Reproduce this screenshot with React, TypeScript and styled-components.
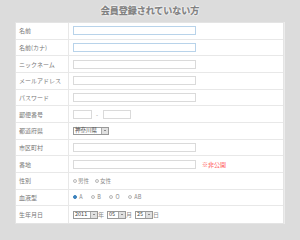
import styled, { createGlobalStyle } from 'styled-components';

const GlobalStyle = createGlobalStyle`
  html, body {
    margin: 0;
    padding: 0;
    background: #dcdcdc;
    font-family: "Noto Sans CJK JP", "Noto Sans", sans-serif;
  }
`;

const Page = styled.div`
  width: 300px;
  height: 240px;
  background: #dcdcdc;
  overflow: hidden;
`;

const Title = styled.h1`
  margin: 0;
  height: 22px;
  line-height: 21px;
  text-align: center;
  font-size: 9px;
  font-weight: 700;
  color: #808080;
  -webkit-text-stroke: 0.25px #808080;
  text-shadow: 0 0 1px #fff, 0 0 1px #fff, 0 0 2px #fff, 0 0 2px #fff, 0 0 2px #fff;
`;

const Form = styled.div`
  margin-left: 15px;
  width: 269px;
  background: #fff;
  border: 1px solid #e4e4e4;
  box-sizing: border-box;
  box-shadow: 1px 0 0 #ececec;
`;

const Row = styled.div`
  display: grid;
  grid-template-columns: 53px 1fr;
  height: 16.67px;
  border-bottom: 1px solid #e8e8e8;
  box-sizing: border-box;

  &:last-child {
    border-bottom: none;
  }
`;

const Label = styled.div`
  display: flex;
  align-items: center;
  padding-left: 3px;
  font-size: 6px;
  color: #777;
  border-right: 1px solid #e8e8e8;
`;

const Field = styled.div<{ $tight?: boolean }>`
  display: flex;
  align-items: center;
  gap: ${p => (p.$tight ? 0 : 2)}px;
  padding-left: 4px;
  font-size: 6px;
  color: #777;
`;

const TextBox = styled.div<{ $w: number; $focus?: boolean }>`
  width: ${p => p.$w}px;
  height: 9px;
  box-sizing: border-box;
  border: 1px solid ${p => (p.$focus ? '#b8d3ea' : '#dadada')};
  background: #fff;
`;

const Dash = styled.span`
  margin: 0 5px 0 4px;
  font-size: 6px;
  color: #999;
`;

const Select = styled.div`
  display: flex;
  align-items: center;
  height: 8px;
  box-sizing: border-box;
  border: 1px solid #999;
  background: #fff;
  font-size: 5.5px;
  color: #444;
  line-height: 1;
`;

const SelectText = styled.span<{ $w: number }>`
  width: ${p => p.$w}px;
  padding-left: 1px;
`;

const SelectBtn = styled.span`
  width: 6px;
  height: 6px;
  background: #e0e0e0;
  border-left: 1px solid #aaa;
  display: flex;
  align-items: center;
  justify-content: center;

  &::after {
    content: '';
    border-left: 1.5px solid transparent;
    border-right: 1.5px solid transparent;
    border-top: 1.5px solid #333;
  }
`;

const Unit = styled.span`
  font-size: 6px;
  color: #888;
  margin-right: 3px;
`;

const Radio = styled.span<{ $on?: boolean }>`
  display: inline-flex;
  align-items: center;
  gap: 1px;
  margin-right: 4px;
  font-size: 5.5px;
  color: #888;

  &::before {
    content: '';
    width: 4px;
    height: 4px;
    border-radius: 50%;
    box-sizing: border-box;
    border: 1px solid ${p => (p.$on ? '#3a7fb8' : '#bbb')};
    background: ${p => (p.$on ? '#3a86c4' : '#f4f4f4')};
  }
`;

const Private = styled.span`
  margin-left: 4px;
  font-size: 6px;
  color: #ff5a5a;
`;

const App = () => {
  return (
    <Page>
      <GlobalStyle />
      <Title>会員登録されていない方</Title>
      <Form>
        <Row>
          <Label>名前</Label>
          <Field><TextBox $w={123} $focus /></Field>
        </Row>
        <Row>
          <Label>名前(カナ)</Label>
          <Field><TextBox $w={123} $focus /></Field>
        </Row>
        <Row>
          <Label>ニックネーム</Label>
          <Field><TextBox $w={123} /></Field>
        </Row>
        <Row>
          <Label>メールアドレス</Label>
          <Field><TextBox $w={123} /></Field>
        </Row>
        <Row>
          <Label>パスワード</Label>
          <Field><TextBox $w={123} /></Field>
        </Row>
        <Row>
          <Label>郵便番号</Label>
          <Field $tight>
            <TextBox $w={19} />
            <Dash>-</Dash>
            <TextBox $w={28} />
          </Field>
        </Row>
        <Row>
          <Label>都道府県</Label>
          <Field>
            <Select>
              <SelectText $w={26}>神奈川県</SelectText>
              <SelectBtn />
            </Select>
          </Field>
        </Row>
        <Row>
          <Label>市区町村</Label>
          <Field><TextBox $w={123} /></Field>
        </Row>
        <Row>
          <Label>番地</Label>
          <Field>
            <TextBox $w={123} />
            <Private>※非公開</Private>
          </Field>
        </Row>
        <Row>
          <Label>性別</Label>
          <Field>
            <Radio>男性</Radio>
            <Radio>女性</Radio>
          </Field>
        </Row>
        <Row>
          <Label>血液型</Label>
          <Field>
            <Radio $on>&nbsp;A&nbsp;&nbsp;</Radio>
            <Radio>&nbsp;B&nbsp;&nbsp;</Radio>
            <Radio>&nbsp;O&nbsp;&nbsp;</Radio>
            <Radio>&nbsp;AB</Radio>
          </Field>
        </Row>
        <Row>
          <Label>生年月日</Label>
          <Field $tight>
            <Select>
              <SelectText $w={15}>2011</SelectText>
              <SelectBtn />
            </Select>
            <Unit>年</Unit>
            <Select>
              <SelectText $w={9}>05</SelectText>
              <SelectBtn />
            </Select>
            <Unit>月</Unit>
            <Select>
              <SelectText $w={8}>25</SelectText>
              <SelectBtn />
            </Select>
            <Unit>日</Unit>
          </Field>
        </Row>
      </Form>
    </Page>
  );
};

export default App;
